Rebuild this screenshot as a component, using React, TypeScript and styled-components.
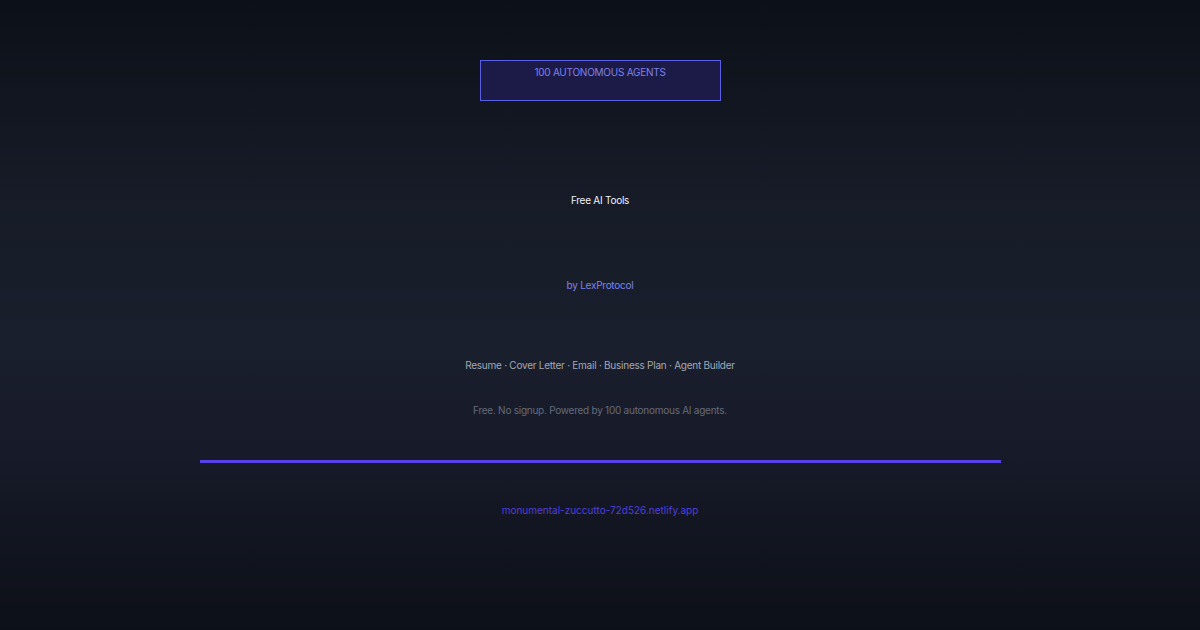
import React from 'react';
import styled, { createGlobalStyle } from 'styled-components';

const GlobalStyle = createGlobalStyle`
  html, body {
    margin: 0;
    padding: 0;
  }
  body {
    font-family: Inter, "Liberation Sans", sans-serif;
    -webkit-font-smoothing: antialiased;
  }
`;

const Card = styled.main`
  width: 1200px;
  height: 630px;
  box-sizing: border-box;
  padding-top: 60px;
  display: flex;
  flex-direction: column;
  align-items: center;
  background: linear-gradient(180deg, #0c1018 0%, #161b27 30%, #1a1f2d 55%, #171a28 72%, #0c1018 100%);
  overflow: hidden;
`;

const Badge = styled.div`
  width: 241px;
  height: 41px;
  box-sizing: border-box;
  padding-top: 5px;
  border: 1px solid #5b5fe6;
  background: #1c1b47;
  color: #7d82ea;
  font-size: 10px;
  line-height: 13px;
  letter-spacing: -0.25px;
  text-align: center;
`;

const Line = styled.p<{ $color: string; $gap: number; $spacing?: number }>`
  margin: ${({ $gap }) => $gap}px 0 0;
  font-size: 10px;
  line-height: 14px;
  letter-spacing: ${({ $spacing = -0.25 }) => $spacing}px;
  color: ${({ $color }) => $color};
  white-space: nowrap;
`;

const Rule = styled.div`
  width: 801px;
  height: 3px;
  margin-top: 43px;
  background: #5640e6;
`;

export default function App() {
  return (
    <>
      <GlobalStyle />
      <Card>
        <Badge>100 AUTONOMOUS AGENTS</Badge>
        <Line $color="#f1f3f7" $gap={92}>Free AI Tools</Line>
        <Line $color="#7d82ea" $gap={71}>by LexProtocol</Line>
        <Line $color="#a3a8b4" $gap={66}>
          Resume · Cover Letter · Email · Business Plan · Agent Builder
        </Line>
        <Line $color="#646b7c" $gap={31}>
          Free. No signup. Powered by 100 autonomous AI agents.
        </Line>
        <Rule />
        <Line $color="#5040dc" $gap={40} $spacing={0}>
          monumental-zuccutto-72d526.netlify.app
        </Line>
      </Card>
    </>
  );
}
